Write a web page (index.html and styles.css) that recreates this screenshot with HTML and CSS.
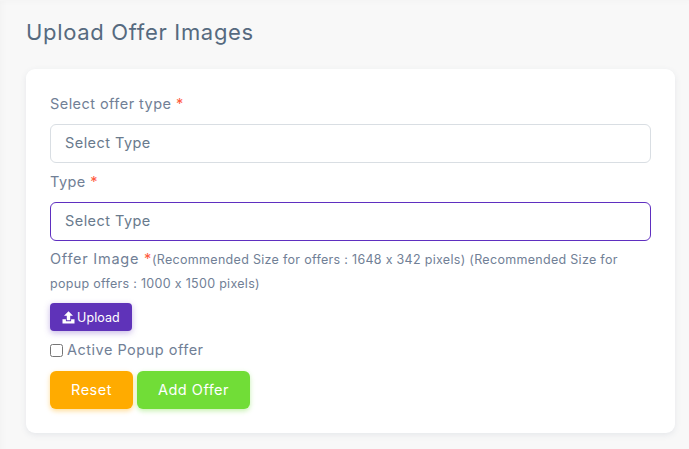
FILE: index.html
```html
<!DOCTYPE html>
<html lang="en">
<head>
<meta charset="utf-8">
<title>Upload Offer Images</title>
<link rel="stylesheet" href="styles.css">
</head>
<body>
<div class="topbar"></div>
<main class="content">
  <h1 class="title">Upload Offer Images</h1>
  <form class="card">
    <div class="label first">Select offer type <span class="req">*</span></div>
    <div class="select">Select Type</div>
    <div class="label second">Type <span class="req">*</span></div>
    <div class="select focus">Select Type</div>
    <div class="image-note"><span class="image-label">Offer Image <span class="req">*</span></span><span class="hint">(Recommended Size for offers : 1648 x 342 pixels) (Recommended Size for popup offers : 1000 x 1500 pixels)</span></div>
    <button type="button" class="upload">
      <svg class="icon" viewBox="0 0 13 13" width="13" height="13" aria-hidden="true"><path fill="#fff" d="M6.5 0.2 L11 4.8 H8.2 V9.2 H4.8 V4.8 H2 Z"/><path fill="#fff" d="M0.5 8.3 H3.9 V10.2 H9.1 V8.3 H12.5 V12.5 H0.5 Z"/></svg>
      <span>Upload</span>
    </button>
    <label class="check"><input type="checkbox" class="box"><span>Active Popup offer</span></label>
    <div class="actions">
      <button type="button" class="btn reset">Reset</button>
      <button type="button" class="btn add">Add Offer</button>
    </div>
  </form>
</main>
</body>
</html>
```
FILE: styles.css
```css
* { box-sizing: border-box; }
html, body { margin: 0; height: 100%; overflow: hidden; }
body {
  background: #f8f8f8;
  font-family: "Inter", "Open Sans", sans-serif;
  font-variant-ligatures: no-contextual;
  font-feature-settings: "calt" 0;
  color: #718096;
  box-shadow: inset 8px 0 8px -8px rgba(0,0,0,.04);
}
.topbar {
  height: 1px;
  background: #f5f5f5;
  box-shadow: 0 1px 4px rgba(0,0,0,.06);
}
.content { padding: 17px 14px 0 26px; }
.title {
  margin: 0 0 22px;
  font-size: 22px;
  line-height: 29px;
  font-weight: 400;
  letter-spacing: .68px;
  color: #566a7f;
}
.card {
  height: 364px;
  padding: 24px 24px 0;
  background: #fff;
  border-radius: 9px;
  box-shadow: 0 2px 6px rgba(67,89,113,.1);
}
.label { font-size: 14.5px; line-height: 22px; letter-spacing: .45px; }
.req { color: #ff5b3f; }
.first { margin-bottom: 9px; }
.second { margin-top: 8px; margin-bottom: 9px; }
.select {
  height: 39px;
  padding: 0 14px;
  border: 1px solid #d9dee3;
  border-radius: 6px;
  font-size: 14.5px;
  line-height: 35px;
  letter-spacing: .45px;
  color: #697a8d;
}
.focus { border-color: #5f2fc0; }
.image-note {
  margin-top: 6px;
  font-size: 12.5px;
  line-height: 24px;
}
.image-label { font-size: 14.5px; letter-spacing: .75px; }
.hint { letter-spacing: .3px; }
.upload {
  display: flex;
  align-items: center;
  gap: 2px;
  margin-top: 7px;
  width: 82px;
  height: 28px;
  padding: 0 12px;
  border: 0;
  border-radius: 4px;
  background: #5f33b9;
  color: #fff;
  font: inherit;
  font-size: 12.5px;
  letter-spacing: .1px;
  box-shadow: 0 2px 6px rgba(95,51,185,.35);
}
.icon { flex: none; }
.check {
  display: flex;
  align-items: center;
  gap: 4px;
  margin-top: 8px;
  font-size: 14.5px;
  line-height: 22px;
  letter-spacing: .5px;
}
.box { margin: 0; width: 13px; height: 13px; }
.actions { display: flex; gap: 4px; margin-top: 10px; }
.btn {
  height: 38px;
  padding: 0 0 2px;
  border: 0;
  border-radius: 6px;
  color: #fff;
  font: inherit;
  font-size: 14.5px;
  letter-spacing: .5px;
}
.reset { width: 83px; background: #ffab00; box-shadow: 0 2px 5px rgba(255,171,0,.4); }
.add { width: 113px; background: #71dd37; box-shadow: 0 2px 5px rgba(113,221,55,.4); }
```
